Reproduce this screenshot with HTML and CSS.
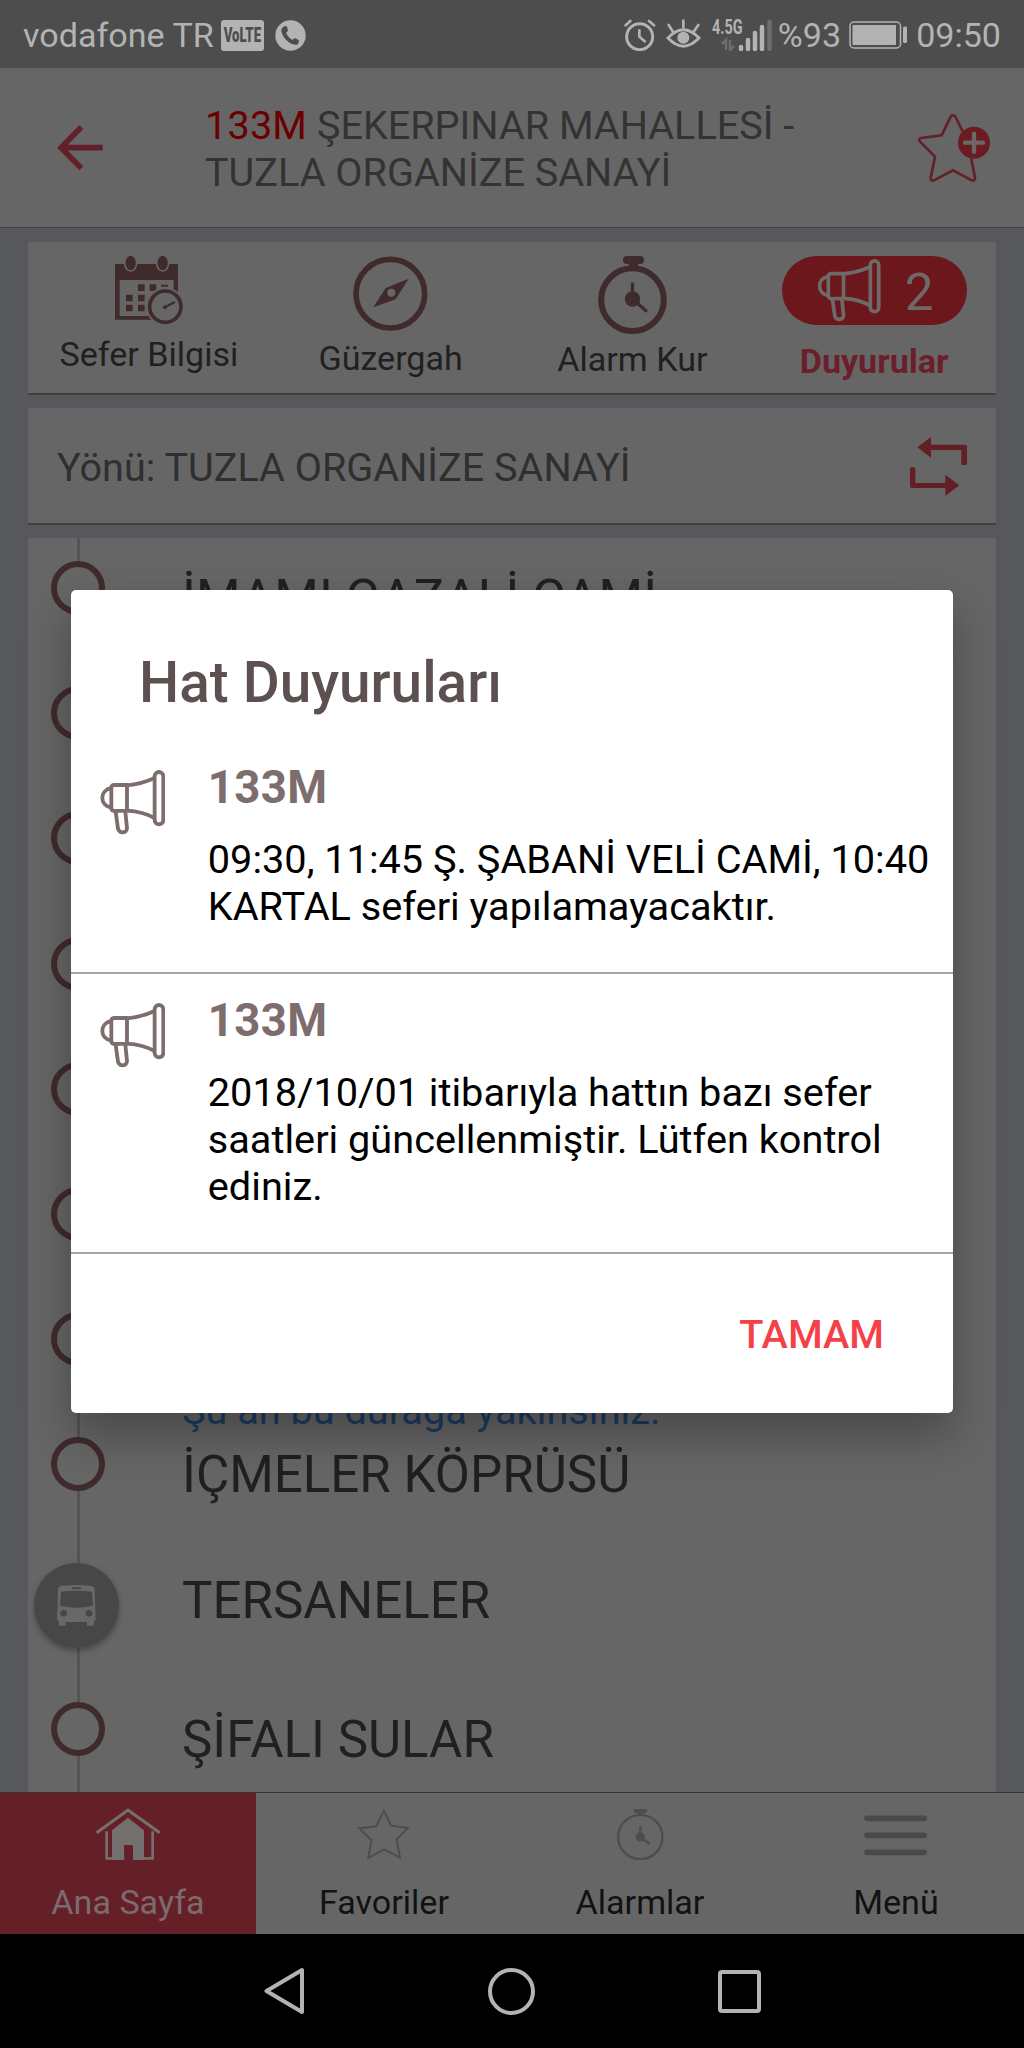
FILE: index.html
```html
<!DOCTYPE html>
<html lang="tr">
<head>
    <meta charset="UTF-8">
    <meta name="viewport" content="width=device-width, initial-scale=1.0">
    <title>133M - Hat Duyuruları</title>
    <link rel="stylesheet" href="styles.css">
</head>
<body>

    <!-- shared icons -->
    <svg class="symbols" width="0" height="0">
        <symbol id="megaphone" viewBox="0 0 196 195">
            <g fill="none" stroke="currentColor" stroke-width="11.500" stroke-linejoin="round">
                <rect x="164" y="6" width="26" height="157" rx="13"/>
                <path d="M81 46C112 43 140 35 164 24M81 122C112 124 140 131 164 144"/>
                <path d="M81 45H42Q34 46 34 54V113Q34 121 42 123L81 122Z"/>
                <path d="M34 54C-2 60-2 107 34 113"/>
                <path d="M47 125L54 176C57 192 82 190 81 174L76 125"/>
            </g>
        </symbol>
    </svg>

    <div class="screen">
        <div class="status-bar">
            <span>vodafone TR</span>
            <div class="volte"><span>VoLTE</span></div>
            <svg class="call" width="31" height="31" viewBox="0 0 31 31">
                <circle cx="15.5" cy="15.5" r="15.2" fill="#b3b3b3"/>
                <path d="M8.5 6.5L11.5 6C12.5 8 13 9.500 12.800 11L11 13C12.500 16 14.500 18.300 17.300 20L19.500 18.200C21.500 18.500 23 19.500 24.300 21L22.500 24.500C15 26.500 5 15 6.500 9Z" fill="#4d4d4d"/>
            </svg>

            <div class="status-right">
                <svg width="32" height="32" viewBox="0 0 96 96" fill="none" stroke="#b3b3b3" stroke-width="9" stroke-linecap="round">
                    <circle cx="47" cy="53" r="39"/>
                    <path d="M5 19L19 6M75 6L90 19M46 34V53L62 67" stroke-width="8"/>
                </svg>
                <svg class="eye" width="35" height="32" viewBox="0 0 105 96">
                    <path d="M6 57Q52 8 99 57Q52 106 6 57Z" fill="none" stroke="#b3b3b3" stroke-width="9"/>
                    <circle cx="52" cy="56" r="18" fill="#b3b3b3"/>
                    <path d="M52 25V5M20 37L8 18M84 37L97 18" stroke="#b3b3b3" stroke-width="8" stroke-linecap="round"/>
                </svg>
                <div class="signal">
                    <span>4.5G</span>
                    <svg width="60" height="32" viewBox="0 0 60 32">
                        <path d="M10 25L14 21V31M18 21V31L22 27" fill="none" stroke="#6d6d6d" stroke-width="2.500"/>
                        <path d="M29 28V30M36 21V30M43 14V30M50 8V30" stroke="#b3b3b3" stroke-width="4.500" stroke-linecap="round"/>
                        <path d="M57.500 3V30" stroke="#6d6d6d" stroke-width="4.500" stroke-linecap="round"/>
                    </svg>
                </div>
                <span>%93</span>
                <svg class="battery" width="59" height="28" viewBox="0 0 59 28">
                    <rect x="1" y="1" width="50.500" height="26" rx="4" fill="none" stroke="#b3b3b3" stroke-width="1.500"/>
                    <rect x="3.500" y="4" width="43.500" height="20" rx="1" fill="#b3b3b3"/>
                    <rect x="54" y="5.500" width="4" height="16.500" rx="1.500" fill="#b3b3b3"/>
                </svg>
                <span>09:50</span>
            </div>
        </div>

        <header class="header">
            <svg width="46" height="46" viewBox="0 0 138 138" fill="none" stroke="#64202a" stroke-width="17">
                <path d="M137 68H12M73 6L12 68L73 130"/>
            </svg>
            <h1 class="header-title"><b>133M</b> ŞEKERPINAR MAHALLESİ - TUZLA ORGANİZE SANAYİ</h1>
            <svg class="fav" width="72" height="68" viewBox="0 0 216 204">
                <path d="M98 8Q105-1 112 8L134 52M160 134L171 192Q171 202 161 199L105 169L48 199Q38 202 38 192L51 128L6 83Q0 75 9 72L71 64L98 8" fill="none" stroke="#64202a" stroke-width="8"/>
                <circle cx="168" cy="86" r="48" fill="#6b1c21"/>
                <path d="M168 59V113M141 86H195" stroke="#6c6868" stroke-width="13" stroke-linecap="round"/>
            </svg>
        </header>

        <main class="content">
            <div class="card actions">
                <div class="action info">
                    <svg width="68.3" height="78" viewBox="0 0 205 234">
                        <path fill="#402b2c" fill-rule="evenodd" d="M0 24H189V191H0ZM14 72V180H176V72Z"/>
                        <g fill="#402b2c" stroke="#666" stroke-width="5">
                            <ellipse cx="47" cy="21" rx="18" ry="24"/>
                            <ellipse cx="143" cy="21" rx="18" ry="24"/>
                        </g>
                        <path fill="#402b2c" d="M69 85h20v20H69zM104 85h20v20H104zM138 86h21v6H138zM33 116h20v20H33zM69 116h20v20H69zM33 146h20v20H33zM69 146h20v20H69z"/>
                        <circle cx="151" cy="152" r="58" fill="#666"/>
                        <circle cx="151" cy="152" r="47" fill="#666" stroke="#402b2c" stroke-width="11"/>
                        <circle cx="150" cy="154" r="6" fill="#402b2c"/>
                        <path d="M150 154L180 138" stroke="#402b2c" stroke-width="7"/>
                    </svg>
                    <span>Sefer Bilgisi</span>
                </div>
                <div class="action route">
                    <svg width="74.700" height="82" viewBox="0 -1 224 246">
                        <circle cx="112" cy="112" r="103" fill="none" stroke="#402b2c" stroke-width="17"/>
                        <path d="M167 67L98 95L61 153L128 129Z" fill="#402b2c"/>
                        <circle cx="115" cy="109" r="12" fill="#666"/>
                    </svg>
                    <span>Güzergah</span>
                </div>
                <div class="action alarm">
                    <svg width="69" height="83" viewBox="0 0 207 249">
                        <circle cx="103.500" cy="131" r="94" fill="none" stroke="#402b2c" stroke-width="18"/>
                        <rect x="75" y="0" width="63" height="24" rx="11" fill="#402b2c"/>
                        <path d="M92 20H120V34H92Z" fill="#402b2c"/>
                        <circle cx="103.500" cy="129" r="23" fill="#402b2c"/>
                        <path d="M103.500 84V129L144 164" fill="none" stroke="#402b2c" stroke-width="10" stroke-linecap="round"/>
                    </svg>
                    <span>Alarm Kur</span>
                </div>
                <div class="action news">
                    <div class="pill">
                        <svg width="64" height="63"><use href="#megaphone"/></svg>
                        <span>2</span>
                    </div>
                    <span>Duyurular</span>
                </div>
            </div>

            <div class="card direction">
                <span>Yönü: TUZLA ORGANİZE SANAYİ</span>
                <svg width="57.300" height="59" viewBox="0 0 172 177" fill="#641f24">
                    <path d="M22 31L63 0V23H166Q171 23 171 28V80Q171 84 167 84H158Q154 84 154 80V39H63V62Z"/>
                    <path d="M148 145L106 177V153H5Q0 153 0 148V95Q0 91 4 91H12Q16 91 16 95V138H106V113Z"/>
                </svg>
            </div>

            <ul class="card stops">
                <li class="stop"><i class="ring"></i><p class="stop-name">İMAMI GAZALİ CAMİ</p></li>
                <li class="stop"><i class="ring"></i></li>
                <li class="stop"><i class="ring"></i></li>
                <li class="stop"><i class="ring"></i></li>
                <li class="stop"><i class="ring"></i></li>
                <li class="stop"><i class="ring"></i></li>
                <li class="stop near"><i class="ring"></i><p class="stop-note">Şu an bu durağa yakınsınız.</p></li>
                <li class="stop"><i class="ring"></i><p class="stop-name">İÇMELER KÖPRÜSÜ</p></li>
                <li class="stop bus">
                    <i class="bus-dot">
                        <svg width="39" height="41" viewBox="0 0 117 123">
                            <path fill="#686868" fill-rule="evenodd" d="M14 2Q58-2 102 2Q113 4 113 14L116 106H111V122H90V111H26V122H5V106H0L3 14Q4 4 14 2ZM12 20L9 62Q58 74 108 62L105 20Q58 14 12 20ZM45 7V12H72V7Z"/>
                            <circle cx="20" cy="85" r="10" fill="#474747"/>
                            <circle cx="96" cy="85" r="10" fill="#474747"/>
                        </svg>
                    </i>
                    <p class="stop-name">TERSANELER</p>
                </li>
                <li class="stop last"><i class="ring"></i><p class="stop-name">ŞİFALI SULAR</p></li>
            </ul>
        </main>

        <nav class="tabs">
            <a class="tab active">
                <svg width="64.300" height="52" viewBox="0 0 193 156">
                    <path d="M2 74L96 6L191 74" fill="none" stroke="#757070" stroke-width="9"/>
                    <path d="M32 70V151H170V70" fill="none" stroke="#757070" stroke-width="8"/>
                    <path d="M48 155V67L96 29L144 67V155H111V112H85V155Z" fill="#757070"/>
                    <path d="M85 112H111V156H85Z" fill="#651f27"/>
                </svg>
                <span>Ana Sayfa</span>
            </a>
            <a class="tab">
                <svg width="53.300" height="52" viewBox="0 0 160 156">
                    <path d="M81 8L102 53L153 60L119 94L129 149L81 124L34 150L43 97L7 61L58 55Z" fill="none" stroke="#4d4d4d" stroke-width="6"/>
                </svg>
                <span>Favoriler</span>
            </a>
            <a class="tab">
                <svg width="47" height="52" viewBox="0 0 141 156">
                    <circle cx="70" cy="87" r="66.500" fill="none" stroke="#4d4d4d" stroke-width="7"/>
                    <path d="M50 3H90V13L78 17V24H62V17L50 13Z" fill="#4d4d4d"/>
                    <circle cx="70" cy="87" r="14" fill="#4d4d4d"/>
                    <path d="M70 54V87L98 108" fill="none" stroke="#4d4d4d" stroke-width="7"/>
                </svg>
                <span>Alarmlar</span>
            </a>
            <a class="tab">
                <svg width="63.300" height="52" viewBox="0 0 190 156">
                    <path d="M9 31H181M9 82H181M9 133H181" stroke="#4a4a4a" stroke-width="17" stroke-linecap="round"/>
                </svg>
                <span>Menü</span>
            </a>
        </nav>

        <div class="system-nav">
            <svg width="41" height="48" viewBox="0 0 41 48" fill="none" stroke="#b3b3b3" stroke-width="4" stroke-linejoin="round">
                <path d="M38 3V45L2.500 24Z"/>
            </svg>
            <i class="nav-home"></i>
            <i class="nav-recent"></i>
        </div>

        <div class="dialog">
            <h2 class="dialog-title">Hat Duyuruları</h2>
            <div class="notice">
                <svg width="65.300" height="65"><use href="#megaphone"/></svg>
                <div class="notice-body">
                    <h3>133M</h3>
                    <p>09:30, 11:45 Ş. ŞABANİ VELİ CAMİ, 10:40 KARTAL seferi yapılamayacaktır.</p>
                </div>
            </div>
            <div class="notice">
                <svg width="65.300" height="65"><use href="#megaphone"/></svg>
                <div class="notice-body">
                    <h3>133M</h3>
                    <p>2018/10/01 itibarıyla hattın bazı sefer saatleri güncellenmiştir. Lütfen kontrol ediniz.</p>
                </div>
            </div>
            <button class="btn">TAMAM</button>
        </div>
    </div>

</body>
</html>
```

FILE: styles.css
```css
* {
    box-sizing: border-box;
    margin: 0;
    padding: 0;
}

body {
    font-family: Roboto, sans-serif;
    background-color: #000;
}

svg {
    display: block;
    flex-shrink: 0;
}

.symbols {
    position: absolute;
}

.screen {
    position: relative;
    width: 1024px;
    height: 2048px;
    display: flex;
    flex-direction: column;
    overflow: hidden;
    background-color: #57585b;
}

/* Status bar */
.status-bar {
    height: 68px;
    flex-shrink: 0;
    display: flex;
    align-items: center;
    padding: 2px 23px 0;
    background-color: #4d4d4d;
    color: #b3b3b3;
    font-size: 34.1px;
}

.volte {
    width: 43px;
    height: 31px;
    margin-left: 7px;
    display: flex;
    align-items: center;
    justify-content: center;
    border-radius: 3px;
    background-color: #b3b3b3;
    color: #4d4d4d;
    font-size: 20px;
    font-weight: 900;
}

.volte span {
    transform: scaleX(0.66);
}

.call {
    margin-left: 11px;
}

.status-right {
    display: flex;
    align-items: center;
    margin-left: auto;
}

.eye {
    margin-left: 10px;
}

.signal {
    position: relative;
    margin: 0 6px 0 11px;
}

/* network type, over the signal bars */
.signal span {
    position: absolute;
    left: 0;
    top: -2px;
    font-size: 20px;
    line-height: 20px;
    font-weight: 700;
    transform: scaleX(0.72);
    transform-origin: left;
}

.battery {
    margin: 0 8px 0 8px;
}

/* Header */
.header {
    height: 160px;
    flex-shrink: 0;
    display: flex;
    align-items: center;
    padding: 0 34px 0 57px;
    background-color: #666;
    border-bottom: 1px solid #3f3f40;
}

.header-title {
    width: 640px;
    margin-left: 102px;
    padding-top: 4px;
    font-size: 39.6px;
    line-height: 46.6px;
    font-weight: 400;
    color: #333;
}

.header-title b {
    font-weight: 400;
    color: #6b0000;
    letter-spacing: 0.2px;
}

.fav {
    margin-left: auto;
}

/* Content */
.content {
    flex: 1;
    min-height: 0;
    display: flex;
    flex-direction: column;
    gap: 13px;
    padding: 14px 28px 0;
}

.card {
    background-color: #666;
    border-bottom: 2px solid #404042;
}

.actions {
    height: 153px;
    flex-shrink: 0;
    display: grid;
    grid-template-columns: repeat(4, 1fr);
    padding: 14px 1px 0 0;
}

.action {
    display: flex;
    flex-direction: column;
    align-items: center;
    font-size: 34.1px;
    line-height: 40px;
    color: #221f1f;
}

.news {
    font-weight: 700;
    color: #6b1f2b;
}

.pill {
    width: 185px;
    height: 69px;
    display: flex;
    align-items: center;
    gap: 24px;
    margin-bottom: 16px;
    padding: 0 0 1px 35px;
    border-radius: 35px;
    background-color: #6b171b;
    color: #6f6969;
    font-size: 51.2px;
    font-weight: 400;
}

.pill span {
    padding-top: 6px;
}

.direction {
    height: 117px;
    flex-shrink: 0;
    display: flex;
    align-items: center;
    justify-content: space-between;
    padding: 2px 29px 0 29px;
    font-size: 39.6px;
    color: #2f2f2f;
}

.direction span {
    padding-top: 2px;
}

.stops {
    flex: 1;
    min-height: 0;
    overflow: hidden;
    list-style: none;
    border-bottom: none;
}

.stop {
    position: relative;
    display: flex;
    height: 125.200px;
    padding-left: 23px;
}

/* vertical line of the route */
.stop::before {
    content: "";
    position: absolute;
    left: 49px;
    top: 0;
    width: 2.500px;
    height: 100%;
    background-color: #545454;
}

.ring {
    position: relative;
    width: 54px;
    height: 54px;
    margin-top: 23px;
    border: 6px solid #402b2c;
    border-radius: 50%;
    background-color: #666;
    flex-shrink: 0;
}

.stop-name {
    margin: 31px 0 0 77px;
    font-size: 51.1px;
    line-height: 60px;
    color: #221f1f;
    white-space: nowrap;
}

.stop-note {
    margin: 99px 0 0 77px;
    font-size: 39.65px;
    line-height: 46.6px;
    color: #1c3c63;
    white-space: nowrap;
}

.near,
.bus {
    z-index: 1;
}

.bus {
    height: 139.700px;
    padding-left: 6px;
}

.bus-dot {
    position: relative;
    width: 85px;
    height: 85px;
    margin-top: 23px;
    display: flex;
    align-items: center;
    justify-content: center;
    border-radius: 50%;
    background-color: #474747;
    box-shadow: 0 3px 6px rgba(0, 0, 0, 0.3);
    flex-shrink: 0;
}

.bus .stop-name {
    margin-left: 63px;
}

/* Bottom tabs */
.tabs {
    height: 142px;
    flex-shrink: 0;
    display: grid;
    grid-template-columns: repeat(4, 1fr);
    background-color: #666;
    border-top: 1px solid #333;
}

.tab {
    display: flex;
    flex-direction: column;
    align-items: center;
    gap: 22px;
    padding-top: 15px;
    font-size: 34.1px;
    line-height: 40px;
    color: #111214;
}

.tab.active {
    background-color: #651f27;
    color: #7a6c6d;
}

/* Android buttons */
.system-nav {
    height: 114px;
    flex-shrink: 0;
    display: flex;
    align-items: center;
    gap: 183px;
    padding-left: 264px;
    background-color: #000;
}

.nav-home {
    width: 47px;
    height: 47px;
    border: 4px solid #b3b3b3;
    border-radius: 50%;
}

.nav-recent {
    width: 43px;
    height: 43px;
    border: 4px solid #b3b3b3;
    border-radius: 4px;
}

/* Dialog */
.dialog {
    position: absolute;
    z-index: 5;
    left: 71px;
    top: 590px;
    width: 882px;
    height: 822.500px;
    display: flex;
    flex-direction: column;
    padding-top: 60px;
    background-color: #fff;
    border-radius: 5px;
    box-shadow: 0 22px 48px rgba(0, 0, 0, 0.3);
}

.dialog-title {
    margin: 0 0 24px 68px;
    font-size: 56.7px;
    line-height: 66.7px;
    font-weight: 500;
    color: #5c5050;
}

.notice {
    display: flex;
    padding: 20px 0 42px 28.500px;
    border-bottom: 2px solid #a6a6a6;
    color: #7e6d6d;
}

.notice svg {
    margin-top: 9px;
}

.notice-body {
    flex: 1;
    margin-left: 43px;
}

.notice h3 {
    margin-bottom: 23px;
    font-size: 45.5px;
    line-height: 53.3px;
    font-weight: 700;
    letter-spacing: 0.4px;
}

.notice p {
    font-size: 39.7px;
    line-height: 46.6px;
    color: #000;
}

.btn {
    flex: 1;
    align-self: flex-end;
    padding: 3px 69px 0 40px;
    border: none;
    background: none;
    font-family: inherit;
    font-size: 39.7px;
    font-weight: 500;
    color: #f44148;
    cursor: pointer;
}
```
